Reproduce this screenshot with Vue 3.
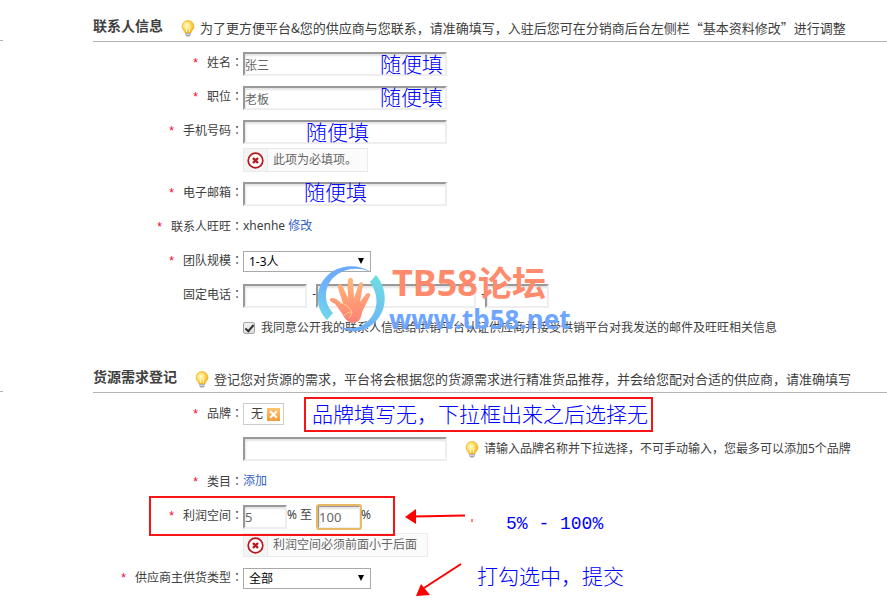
<script setup>
  import { ref } from 'vue'

  const name = ref('张三')
  const job = ref('老板')
  const mobile = ref('')
  const email = ref('')
  const teamSize = ref('1-3人')
  const areaCode = ref('')
  const phone = ref('')
  const extension = ref('')
  const agree = ref(true)

  const brands = ref(['无'])
  const brandKeyword = ref('')
  const profitMin = ref('5')
  const profitMax = ref('100')
  const supplyType = ref('全部')

  function removeBrand(brand) {
    brands.value = brands.value.filter((item) => item !== brand)
  }

  // handwritten notes on top of the form
  const notes = [
    { text: '随便填', x: 380, y: 49 },
    { text: '随便填', x: 380, y: 82 },
    { text: '随便填', x: 306, y: 117 },
    { text: '随便填', x: 304, y: 177 },
    { text: '品牌填写无，下拉框出来之后选择无', x: 312, y: 399 },
    { text: '5% - 100%', x: 506, y: 510, mono: true },
    { text: '打勾选中，提交', x: 477, y: 561 }
  ]
</script>

<template>
  <div class="page">
    <svg class="defs" width="0" height="0" aria-hidden="true">
      <defs>
        <radialGradient id="glass" cx="0.4" cy="0.4" r="0.6">
          <stop offset="0" stop-color="#fffbe0" />
          <stop offset="0.5" stop-color="#ffe36a" />
          <stop offset="1" stop-color="#f5b31c" />
        </radialGradient>
        <symbol id="bulb" viewBox="0 0 14 17">
          <path d="M7 .6a5.9 5.9 0 0 0-5.9 5.8c0 2.4 1.5 3.6 2.4 4.9.4.6.5 1.2.6 1.7h5.8c.1-.5.2-1.1.6-1.7.9-1.3 2.4-2.5 2.4-4.9A5.9 5.9 0 0 0 7 .6z" fill="url(#glass)" stroke="#eeb02c" stroke-width=".8" />
          <path d="M5.5 12V8.5L4.6 7M8.5 12V8.5L9.4 7" fill="none" stroke="#fff8cf" stroke-width=".9" />
          <path d="M4.3 13h5.4v2l-1.2 1.4h-3L4.3 15z" fill="#a9a3ae" />
          <path d="M4.8 14.3h4.4" stroke="#eee" stroke-width=".8" />
        </symbol>
        <symbol id="wrong" viewBox="0 0 17 17">
          <circle cx="8.5" cy="8.5" r="7.3" fill="#fff" stroke="#b8181c" stroke-width="1.7" />
          <path d="M6 6l5 5M11 6l-5 5" stroke="#b8181c" stroke-width="2.4" />
        </symbol>
      </defs>
    </svg>

    <form @submit.prevent>
      <section>
        <header>
          <span class="stub"></span>
          <div class="heading">
            <h2>联系人信息</h2>
            <p class="hint">
              <svg class="bulb"><use href="#bulb" /></svg>
              为了更方便平台&amp;您的供应商与您联系，请准确填写，入驻后您可在分销商后台左侧栏“基本资料修改”进行调整
            </p>
          </div>
        </header>

        <div class="rows">
          <div class="row">
            <label class="label" for="name"><i>*</i>姓名<b>：</b></label>
            <input id="name" v-model="name" class="text" type="text">
          </div>
          <div class="row">
            <label class="label" for="job"><i>*</i>职位<b>：</b></label>
            <input id="job" v-model="job" class="text" type="text">
          </div>
          <div class="row">
            <label class="label" for="mobile"><i>*</i>手机号码<b>：</b></label>
            <div class="stack">
              <input id="mobile" v-model="mobile" class="text" type="text">
              <p class="error">
                <span><svg><use href="#wrong" /></svg></span>
                此项为必填项。
              </p>
            </div>
          </div>
          <div class="row">
            <label class="label" for="email"><i>*</i>电子邮箱<b>：</b></label>
            <input id="email" v-model="email" class="text" type="text">
          </div>
          <div class="row">
            <span class="label"><i>*</i>联系人旺旺<b>：</b></span>
            <span>xhenhe <a href="#">修改</a></span>
          </div>
          <div class="row">
            <label class="label" for="team"><i>*</i>团队规模<b>：</b></label>
            <div class="select">
              <select id="team" v-model="teamSize">
                <option>1-3人</option>
                <option>4-10人</option>
              </select>
              <svg viewBox="0 0 8 8"><path d="M1 1h6L4 7z" /></svg>
            </div>
          </div>
          <div class="row">
            <label class="label" for="area">固定电话<b>：</b></label>
            <input id="area" v-model="areaCode" class="text short" type="text">
            <span class="dash">-</span>
            <input v-model="phone" class="text medium" type="text" aria-label="电话号码">
            <span class="dash">-</span>
            <input v-model="extension" class="text short" type="text" aria-label="分机">
          </div>
          <div class="row">
            <span class="label"></span>
            <label class="agree">
              <input v-model="agree" type="checkbox">
              我同意公开我的联系人信息给供销平台认证供应商并接受供销平台对我发送的邮件及旺旺相关信息
            </label>
          </div>
        </div>
      </section>

      <section>
        <header>
          <span class="stub"></span>
          <div class="heading">
            <h2>货源需求登记</h2>
            <p class="hint">
              <svg class="bulb"><use href="#bulb" /></svg>
              登记您对货源的需求，平台将会根据您的货源需求进行精准货品推荐，并会给您配对合适的供应商，请准确填写
            </p>
          </div>
        </header>

        <div class="rows">
          <div class="row">
            <label class="label" for="brand"><i>*</i>品牌<b>：</b></label>
            <span v-for="brand in brands" :key="brand" class="tag">
              {{ brand }}
              <button type="button" aria-label="删除" @click="removeBrand(brand)">
                <svg viewBox="0 0 13 13"><path d="M3.2 3.2l6.6 6.6M9.8 3.2l-6.6 6.6" /></svg>
              </button>
            </span>
          </div>
          <div class="row">
            <span class="label"></span>
            <input id="brand" v-model="brandKeyword" class="text" type="text">
            <p class="tip">
              <svg class="bulb"><use href="#bulb" /></svg>
              请输入品牌名称并下拉选择，不可手动输入，您最多可以添加5个品牌
            </p>
          </div>
          <div class="row">
            <span class="label"><i>*</i>类目<b>：</b></span>
            <a href="#">添加</a>
          </div>
          <div class="row">
            <label class="label" for="min"><i>*</i>利润空间<b>：</b></label>
            <div class="stack">
              <div class="range">
                <input id="min" v-model="profitMin" class="text tiny" type="text">
                <span>% 至</span>
                <input v-model="profitMax" class="text tiny active" type="text" aria-label="利润上限">
                <span>%</span>
              </div>
              <p class="error">
                <span><svg><use href="#wrong" /></svg></span>
                利润空间必须前面小于后面
              </p>
            </div>
          </div>
          <div class="row">
            <label class="label" for="supply"><i>*</i>供应商主供货类型<b>：</b></label>
            <div class="select">
              <select id="supply" v-model="supplyType">
                <option>全部</option>
              </select>
              <svg viewBox="0 0 8 8"><path d="M1 1h6L4 7z" /></svg>
            </div>
          </div>
        </div>
      </section>
    </form>

    <!-- forum watermark -->
    <div class="watermark">
      <svg viewBox="0 0 68 68">
        <defs>
          <linearGradient id="ringLeft" x1="0" y1="1" x2="0.6" y2="0">
            <stop offset="0" stop-color="#6fe0e4" />
            <stop offset="0.5" stop-color="#6db4fb" />
            <stop offset="1" stop-color="#6ca9fb" />
          </linearGradient>
          <linearGradient id="ringRight" x1="0.7" y1="0" x2="0.3" y2="1">
            <stop offset="0" stop-color="#6fdce4" />
            <stop offset="1" stop-color="#6ca9fb" />
          </linearGradient>
          <linearGradient id="palm" x1="0" y1="0" x2="0" y2="1">
            <stop offset="0" stop-color="#ffb978" />
            <stop offset="1" stop-color="#ff8076" />
          </linearGradient>
        </defs>
        <path d="M54 7C37-4 13 1 4 19c-6 13-3 27 6 36l6-7C7 38 6 24 16 13 26 3 41 1 54 7z" fill="url(#ringLeft)" />
        <path d="M59 10l-6 7c10 14 8 30-3 40-8 7-19 8-29 4 10 8 26 7 36-3 14-13 14-34 2-48z" fill="url(#ringRight)" />
        <path d="M26 50c-3-4-5-8-8-11-3-2-6-3-5-5 2-2 6-1 10 3l3 2c-1-6-5-13-5-18 1-3 4-2 5 1l5 11c0-6-1-13 0-18 1-3 4-3 5 0l1 18 5-14c1-3 5-2 4 1l-3 17 6-8c2-2 5-1 4 2l-7 14c-2 5-2 10-6 12-5 2-11 0-14-7z" fill="url(#palm)" />
        <path d="M23 38c5 1 10 4 12 10M27 51c2-3 5-4 7-4 1 2 0 4-2 6" fill="none" stroke="#ffd083" stroke-width="1" />
      </svg>
      <div>
        <strong>TB58<span>论坛</span></strong>
        <em>www.tb58.net</em>
      </div>
    </div>

    <div class="mark brand-mark"></div>
    <div class="mark profit-mark"></div>
    <p
      v-for="(note, index) in notes"
      :key="index"
      class="note"
      :class="{ mono: note.mono }"
      :style="{ left: `${note.x}px`, top: `${note.y}px` }"
    >{{ note.text }}</p>
    <svg class="arrows" viewBox="0 0 72 92">
      <path d="M10 12.5L61 11.5M20 84L57 60" fill="none" stroke="#fe0000" stroke-width="2" />
      <path d="M1 13l11-8v15zM12 92l5-12 9 11z" fill="#fe0000" />
      <path d="M68 15v3" stroke="#fe0000" stroke-width="1" />
    </svg>
  </div>
</template>

<style>
  body {
    background: #fff;
  }
</style>

<style scoped>
  .page {
    position: relative;
    min-height: 100vh;
    overflow: hidden;

    font-family: "Noto Sans", "Noto Sans CJK SC", sans-serif;
    font-size: 12px;
    line-height: 20px;
    color: #404040;
  }

  .defs {
    position: absolute;
  }

  h2, p {
    margin: 0;
  }

  a {
    color: #3464c8;
    text-decoration: none;
  }

  section + section {
    margin-top: 9px;
  }

  header {
    display: flex;
  }

  .stub {
    width: 3px;
    height: 40px;
    margin-right: 90px;
    border-bottom: 1px solid #b4b4b4;
  }

  .heading {
    flex: 1;
    height: 41px;

    display: flex;
    align-items: flex-end;
    gap: 18px;

    border-bottom: 1px solid #b4b4b4;
    white-space: nowrap;
  }

  h2 {
    padding-bottom: 5px;

    font-size: 14px;
    font-weight: 700;
    line-height: 20px;
  }

  .hint, .tip {
    display: flex;
    align-items: center;
    gap: 5px;

    white-space: nowrap;
  }

  .hint {
    padding-bottom: 3px;

    font-family: "Noto Sans CJK SC", sans-serif;
    font-size: 13px;
  }

  .tip {
    height: 24px;
    margin-left: 18px;
  }

  .bulb {
    width: 14px;
    height: 17px;
  }

  .rows {
    padding: 10px 0 0 93px;

    display: flex;
    flex-direction: column;
    gap: 10px;
  }

  .row {
    min-height: 24px;

    display: flex;
    align-items: flex-start;
  }

  .label {
    flex: none;
    width: 150px;

    text-align: right;
    white-space: nowrap;
  }

  .label i {
    margin-right: 9px;

    font-family: "Liberation Sans", sans-serif;
    font-style: normal;
    color: #f00028;
  }

  .label b {
    font-family: "Noto Sans CJK TC", sans-serif;
    font-weight: 400;
  }

  .stack {
    display: flex;
    flex-direction: column;
    align-items: flex-start;
    gap: 4px;
  }

  .text {
    box-sizing: border-box;
    width: 204px;
    height: 24px;
    padding: 2px 0 0;

    background: #fff;
    border: 2px solid;
    border-color: #999 #eee #eee #999;
    box-shadow: inset 1px 2px 2px #e4e4e4;
    outline: none;

    font-family: "Noto Sans", "Noto Sans CJK SC", sans-serif;
    font-size: 12px;
    color: #666;
  }

  .short {
    width: 64px;
  }

  .medium {
    width: 160px;
  }

  .tiny {
    width: 44px;
  }

  .active {
    border-radius: 2px;
    outline: 2px solid #e8b964;
    outline-offset: -1px;
  }

  .dash {
    width: 9px;

    text-align: right;
  }

  .range {
    display: flex;
    align-items: flex-start;
  }

  .range span + .active {
    margin-left: 5px;
  }

  .range .text {
    padding-top: 0;

    font-size: 13px;
  }

  .error {
    box-sizing: border-box;
    height: 24px;
    padding-right: 10px;

    display: flex;
    align-items: center;
    gap: 5px;

    background: #fbfbfb;
    border: 1px solid #ebebeb;
    color: #666;
    white-space: nowrap;
  }

  .error span {
    width: 23px;
    height: 22px;

    display: flex;
    justify-content: center;
    align-items: center;

    background: #f4f4f4;
    border-right: 1px solid #e8e8e8;
  }

  .error svg {
    width: 17px;
    height: 17px;
  }

  .select {
    position: relative;
    width: 128px;
    margin-top: 1px;
  }

  .select select {
    appearance: none;
    display: block;
    width: 100%;
    height: 21px;
    padding: 0 20px 0 5px;

    background: #fff;
    border: 1px solid #a9a9a9;
    border-radius: 0;

    font-family: "Noto Sans", "Noto Sans CJK SC", sans-serif;
    font-size: 12px;
    color: #000;
  }

  .select svg {
    position: absolute;
    top: 6px;
    right: 6px;
    width: 8px;
    height: 8px;

    pointer-events: none;
  }

  .agree {
    display: flex;
    align-items: center;
    gap: 6px;

    white-space: nowrap;
  }

  .agree input {
    appearance: none;
    width: 12px;
    height: 12px;
    margin: 0;

    display: flex;
    justify-content: center;

    background: linear-gradient(#f2f2f2, #dedede);
    border: 1px solid #a5a5a5;
    border-radius: 2px;
  }

  .agree input:checked::before {
    content: "";
    width: 3px;
    height: 7px;

    border: solid #333;
    border-width: 0 2px 2px 0;
    transform: rotate(40deg);
  }

  .tag {
    box-sizing: border-box;
    height: 22px;
    padding: 0 3px 0 7px;

    display: flex;
    align-items: center;
    gap: 4px;

    border: 1px solid #ccc;
  }

  .tag button {
    width: 13px;
    height: 13px;
    padding: 0;

    background: linear-gradient(#ffc56e, #f7993a);
    border: none;
    cursor: pointer;
  }

  .tag svg {
    display: block;
  }

  .tag path {
    stroke: #fff;
    stroke-width: 2;
  }

  .watermark {
    position: absolute;
    top: 265px;
    left: 317px;

    display: flex;
    gap: 4px;

    pointer-events: none;
  }

  .watermark > svg {
    width: 68px;
    height: 68px;
  }

  .watermark strong, .watermark em {
    display: block;

    font-style: normal;
    font-weight: 700;
    white-space: nowrap;
  }

  .watermark strong {
    padding-left: 3px;

    font-size: 36px;
    line-height: 36px;
    color: #ff8a6c;
  }

  .watermark strong span {
    font-size: 34px;
  }

  .watermark em {
    font-size: 26px;
    line-height: 36px;
    color: #6ea6ff;
  }

  .mark {
    position: absolute;
    box-sizing: border-box;

    border: 2px solid #f81414;
    pointer-events: none;
  }

  .brand-mark {
    top: 397px;
    left: 304px;
    width: 349px;
    height: 35px;
  }

  .profit-mark {
    top: 496px;
    left: 149px;
    width: 246px;
    height: 40px;
  }

  .note {
    position: absolute;

    font-family: "Noto Sans CJK SC", sans-serif;
    font-size: 21px;
    font-weight: 300;
    line-height: 28px;
    color: #00f;
    white-space: nowrap;
    pointer-events: none;
  }

  .mono {
    font-family: "Liberation Mono", monospace;
    font-size: 18px;
  }

  .arrows {
    position: absolute;
    top: 504px;
    left: 404px;
    width: 72px;
    height: 92px;

    overflow: visible;
    pointer-events: none;
  }
</style>
